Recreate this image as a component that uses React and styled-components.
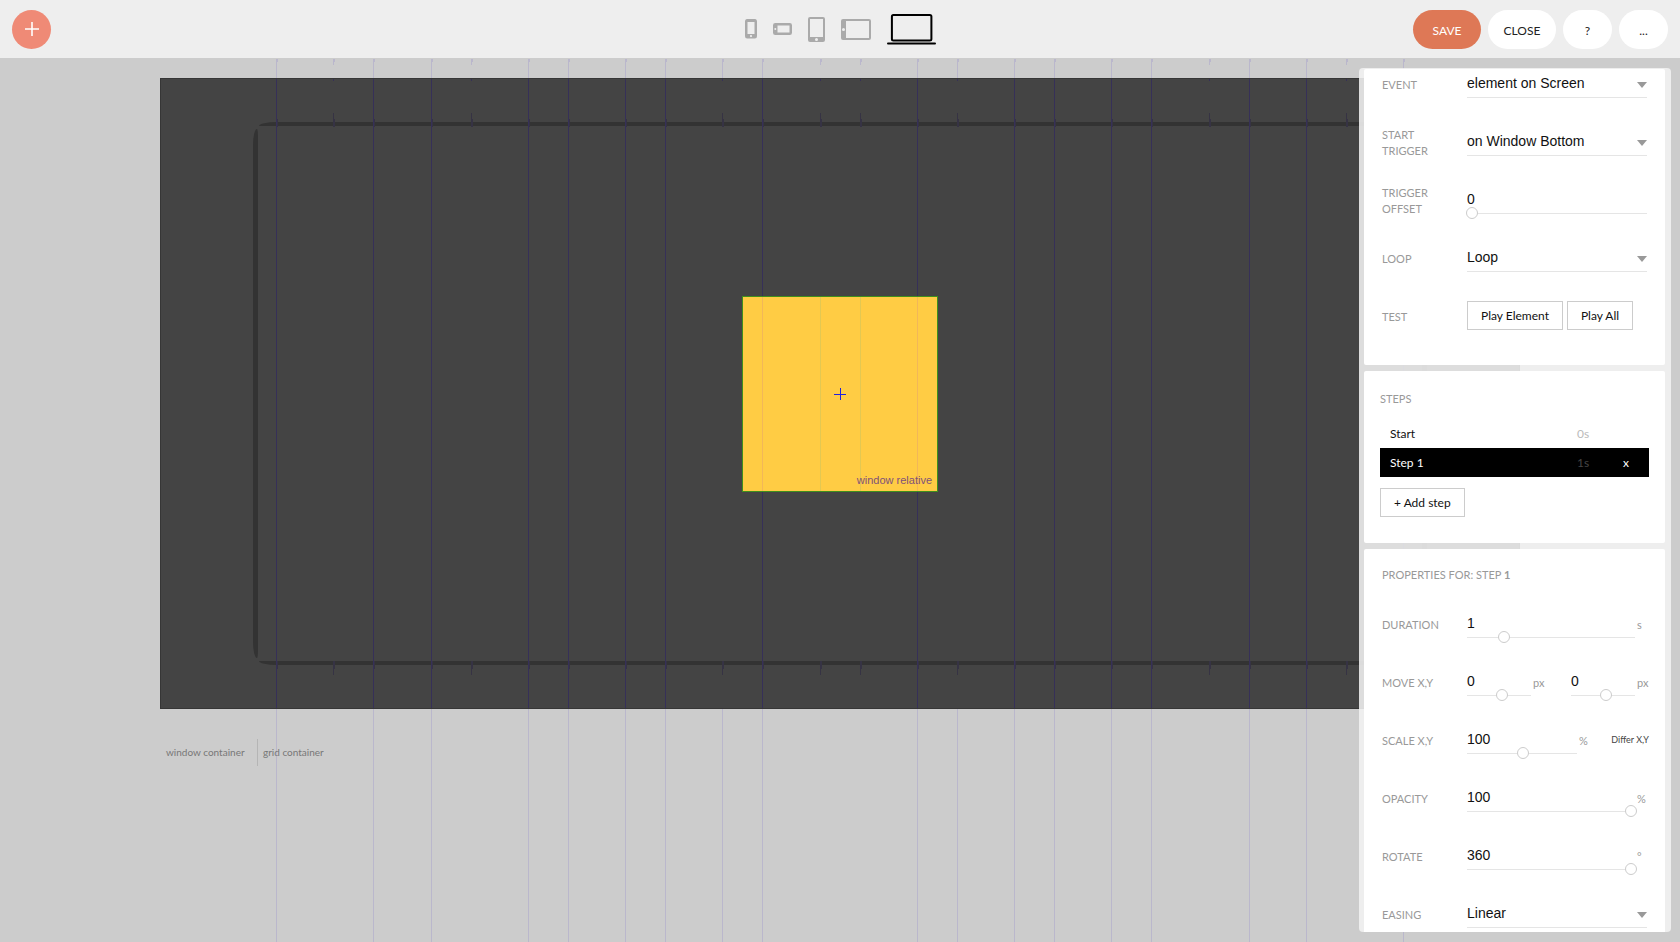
import React from "react";
import styled, { createGlobalStyle, css } from "styled-components";

// [left edge, right edge] of every grid column
const columns = [
  ["line", "tick"],
  ["line", "line"],
  ["tick", "line"],
  ["line", "line"],
  ["line", "outside"],
  ["line", "tick"],
  ["tick", "line"],
  ["outside", "line"],
  ["line", "line"],
  ["line", "tick"],
  ["line", "line"],
  ["tick", "line"],
];

function Guides({ tone }) {
  return (
    <GuideGrid aria-hidden="true">
      {columns.map(([left, right], i) => (
        <GuideColumn key={i}>
          <Guide $tone={tone} $kind={left} />
          <Guide $tone={tone} $kind={right} />
        </GuideColumn>
      ))}
    </GuideGrid>
  );
}

function SelectRow({ id, label, options }) {
  return (
    <Row>
      <Label htmlFor={id}>{label}</Label>
      <SelectBox>
        <Select id={id}>
          {options.map((option) => (
            <option key={option}>{option}</option>
          ))}
        </Select>
        <Arrow viewBox="0 0 10 6">
          <path d="M0 0h10L5 6z" fill="#999" />
        </Arrow>
      </SelectBox>
    </Row>
  );
}

function Slider({ id, name, value, unit, position, width }) {
  return (
    <SliderGroup $width={width}>
      <SliderBox>
        <NumberInput id={id} aria-label={name} defaultValue={value} />
        <Range
          type="range"
          aria-label={`${name} slider`}
          min="0"
          max="100"
          defaultValue={position}
        />
      </SliderBox>
      {unit && <Unit>{unit}</Unit>}
    </SliderGroup>
  );
}

export default function App() {
  return (
    <Page>
      <GlobalStyle />
      <Header>
        <AddButton aria-label="Add element">
          <svg width="14" height="14" viewBox="0 0 14 14">
            <path d="M7 0v14M0 7h14" stroke="#fff" strokeWidth="1.6" />
          </svg>
        </AddButton>
        <Devices>
          <DeviceButton aria-label="Phone portrait">
            <svg width="12" height="20" viewBox="0 0 12 20">
              <path
                fillRule="evenodd"
                fill="#aaa"
                d="M2.5 0h7A2.3 2.3 0 0 1 12 2.3v15a2.3 2.3 0 0 1-2.5 2.3h-7A2.3 2.3 0 0 1 0 17.3v-15A2.3 2.3 0 0 1 2.5 0zM2.5 3v12h7V3zM6 16a1.1 1.1 0 1 0 0 2.2 1.1 1.1 0 0 0 0-2.2z"
              />
            </svg>
          </DeviceButton>
          <DeviceButton aria-label="Phone landscape">
            <svg width="19" height="12" viewBox="0 0 19 12">
              <path
                fillRule="evenodd"
                fill="#aaa"
                d="M2.3 0h14.4A2.3 2.3 0 0 1 19 2.3v7.4a2.3 2.3 0 0 1-2.3 2.3H2.3A2.3 2.3 0 0 1 0 9.7V2.3A2.3 2.3 0 0 1 2.3 0zM4.5 2.5v7h12v-7zM2.3 5a1 1 0 1 0 0 2 1 1 0 0 0 0-2z"
              />
            </svg>
          </DeviceButton>
          <DeviceButton aria-label="Tablet portrait">
            <svg width="17" height="25" viewBox="0 0 17 25">
              <path
                fillRule="evenodd"
                fill="#aaa"
                d="M2 0h13a2 2 0 0 1 2 2v21a2 2 0 0 1-2 2H2a2 2 0 0 1-2-2V2a2 2 0 0 1 2-2zM2 2v18h13V2zM8.5 21a1.5 1.5 0 1 0 0 3 1.5 1.5 0 0 0 0-3z"
              />
            </svg>
          </DeviceButton>
          <DeviceButton aria-label="Tablet landscape">
            <svg width="30" height="21" viewBox="0 0 30 21">
              <path
                fillRule="evenodd"
                fill="#aaa"
                d="M2 0h26a2 2 0 0 1 2 2v17a2 2 0 0 1-2 2H2a2 2 0 0 1-2-2V2a2 2 0 0 1 2-2zM5 2v17h23V2zM2.5 9a1.5 1.5 0 1 0 0 3 1.5 1.5 0 0 0 0-3z"
              />
            </svg>
          </DeviceButton>
          <DeviceButton aria-label="Desktop">
            <svg width="49" height="31" viewBox="0 0 49 31">
              <rect x="4.9" y="1" width="39.5" height="25.5" rx="1.5" fill="none" stroke="#000" strokeWidth="2" />
              <path d="M1 29.5h47" stroke="#000" strokeWidth="2" strokeLinecap="round" />
            </svg>
          </DeviceButton>
        </Devices>
        <Actions>
          <Pill $primary>SAVE</Pill>
          <Pill>CLOSE</Pill>
          <Pill $small aria-label="Help">?</Pill>
          <Pill $small aria-label="More">...</Pill>
        </Actions>
      </Header>

      <Canvas>
        <Guides tone="light" />
        <WindowContainer>
          <Guides tone="dark" />
          <Frame>
            <HorizontalEdge />
            <VerticalEdges />
            <HorizontalEdge $bottom />
          </Frame>
          <Element>
            <Guides tone="element" />
            <Cross width="12" height="12" viewBox="0 0 12 12">
              <path d="M6.5 0v12M0 6.5h12" stroke="#2222dd" strokeWidth="1" />
            </Cross>
            <ElementTag>window relative</ElementTag>
          </Element>
        </WindowContainer>
        <Legend>
          <LegendWindow>window container</LegendWindow>
          <LegendGrid>grid container</LegendGrid>
        </Legend>

        <Panel>
          <Card $first>
            <SelectRow
              id="event"
              label="EVENT"
              options={["element on Screen"]}
            />
            <SelectRow
              id="trigger"
              label="START TRIGGER"
              options={["on Window Bottom"]}
            />
            <Row>
              <Label htmlFor="offset">TRIGGER OFFSET</Label>
              <Fields $inset>
                <Slider id="offset" name="Trigger offset" value="0" position="0" />
              </Fields>
            </Row>
            <SelectRow id="loop" label="LOOP" options={["Loop"]} />
            <Row>
              <Label as="span">TEST</Label>
              <Buttons>
                <OutlineButton>Play Element</OutlineButton>
                <OutlineButton>Play All</OutlineButton>
              </Buttons>
            </Row>
          </Card>

          <StepsCard>
            <Title>STEPS</Title>
            <Step>
              <span>Start</span>
              <StepTime>0s</StepTime>
            </Step>
            <Step $active>
              <span>Step 1</span>
              <StepTime $active>1s</StepTime>
              <RemoveButton>x</RemoveButton>
            </Step>
            <AddStep>+ Add step</AddStep>
          </StepsCard>

          <Card>
            <Title $inset>
              PROPERTIES FOR: STEP <b>1</b>
            </Title>
            <Row>
              <Label htmlFor="duration">DURATION</Label>
              <Fields>
                <Slider id="duration" name="Duration" value="1" unit="s" position="20" />
              </Fields>
            </Row>
            <Row>
              <Label htmlFor="moveX">MOVE X,Y</Label>
              <Fields>
                <Slider id="moveX" name="Move X" value="0" unit="px" position="54" />
                <Slider id="moveY" name="Move Y" value="0" unit="px" position="54" />
              </Fields>
            </Row>
            <Row>
              <Label htmlFor="scale">SCALE X,Y</Label>
              <Fields $tight>
                <Slider id="scale" name="Scale" value="100" unit="%" position="50" width={124} />
                <DifferButton>Differ X,Y</DifferButton>
              </Fields>
            </Row>
            <Row>
              <Label htmlFor="opacity">OPACITY</Label>
              <Fields>
                <Slider id="opacity" name="Opacity" value="100" unit="%" position="100" />
              </Fields>
            </Row>
            <Row>
              <Label htmlFor="rotate">ROTATE</Label>
              <Fields>
                <Slider id="rotate" name="Rotate" value="360" unit="°" position="100" />
              </Fields>
            </Row>
            <SelectRow id="easing" label="EASING" options={["Linear"]} />
          </Card>
        </Panel>
      </Canvas>
    </Page>
  );
}

const GlobalStyle = createGlobalStyle`
  * {
    box-sizing: border-box;
  }
  body {
    margin: 0;
    font-family: Lato, sans-serif;
    font-size: 13px;
    color: #111;
  }
  button,
  input,
  select {
    margin: 0;
    padding: 0;
    border: 0;
    border-radius: 0;
    background: transparent;
    font: inherit;
    color: inherit;
  }
  button {
    cursor: pointer;
  }
  svg {
    display: block;
  }
`;

const Page = styled.div`
  display: flex;
  flex-direction: column;
  height: 100vh;
  min-height: 600px;
  overflow: hidden;
  background: #ccc;
`;

const Header = styled.header`
  display: grid;
  grid-template-columns: 1fr auto 1fr;
  align-items: center;
  flex: none;
  height: 58px;
  padding: 0 12px;
  background: #eee;
`;

const AddButton = styled.button`
  display: flex;
  align-items: center;
  justify-content: center;
  width: 39px;
  height: 39px;
  border-radius: 50%;
  background: #ef8a76;
`;

const Devices = styled.nav`
  display: flex;
  align-items: center;
  gap: 16px;
`;

const DeviceButton = styled.button`
  display: block;
`;

const Actions = styled.div`
  display: flex;
  justify-content: flex-end;
  gap: 7px;
`;

const Pill = styled.button`
  width: ${(props) => (props.$small ? "49px" : "68px")};
  height: 39px;
  padding-top: 2px;
  border-radius: 20px;
  background: ${(props) => (props.$primary ? "#de7856" : "#fff")};
  color: ${(props) => (props.$primary ? "#fff" : "#222")};
  font-size: 12px;
`;

const Canvas = styled.main`
  position: relative;
  flex: 1;
  padding: 20px 160px 0;
`;

const GuideGrid = styled.div`
  position: absolute;
  top: 0;
  bottom: 0;
  left: 50%;
  display: grid;
  grid-template-columns: repeat(12, 1fr);
  column-gap: 39px;
  width: 1128px;
  margin-left: -564px;
  pointer-events: none;
`;

const GuideColumn = styled.div`
  display: flex;
  justify-content: space-between;
  margin-right: -1px;
`;

const lightGuide = css`
  background:
    linear-gradient(#bab7cc, #bab7cc) 0 1px / 1px
      ${(props) => (props.$kind === "tick" ? "6px" : "100%")} no-repeat,
    linear-gradient(#bab7cc, #bab7cc) 0 1px / 2px 3px no-repeat;
`;

const darkGuide = css`
  background:
    linear-gradient(#363058, #363058) 0 0 / 1px
      ${(props) => (props.$kind === "line" ? "100%" : "2px")} no-repeat,
    linear-gradient(#363344, #363344) 0 34px / 1px 14px no-repeat,
    linear-gradient(#363344, #363344) 0 40px / 2px 8px no-repeat,
    linear-gradient(#363344, #363344) 0 calc(100% - 33px) / 1px 14px no-repeat,
    linear-gradient(#363344, #363344) 0 calc(100% - 39px) / 2px 8px no-repeat;
`;

const elementGuide = css`
  background: linear-gradient(
      ${(props) => (props.$kind === "line" ? "#f2b758, #f2b758" : "#e3c852, #e3c852")}
    )
    0 0 / 1px 100% no-repeat;
`;

const Guide = styled.i`
  width: 2px;
  ${(props) => props.$tone === "light" && lightGuide}
  ${(props) => props.$tone === "dark" && darkGuide}
  ${(props) => props.$tone === "element" && elementGuide}
`;

const WindowContainer = styled.section`
  position: relative;
  display: flex;
  height: calc(100vh - 311px);
  padding: 43px 92px;
  border: 1px solid #363636;
  background: #444;
`;

const Frame = styled.div`
  display: flex;
  flex-direction: column;
  flex: 1;
`;

const HorizontalEdge = styled.div`
  height: 4px;
  margin: 0 6px;
  border-radius: ${(props) =>
    props.$bottom ? "0 0 18px 18px / 0 0 4px 4px" : "18px 18px 0 0 / 4px 4px 0 0"};
  background: #333;
`;

const VerticalEdges = styled.div`
  display: flex;
  justify-content: space-between;
  flex: 1;
  margin: 3px 0;
  &::before,
  &::after {
    content: "";
    width: 5px;
    border-radius: 4px 1px 1px 4px / 16px 8px 8px 16px;
    background: #333;
  }
  &::after {
    border-radius: 1px 4px 4px 1px / 8px 16px 16px 8px;
  }
`;

const Element = styled.div`
  position: absolute;
  top: 50%;
  left: 50%;
  display: grid;
  place-items: center;
  width: 196px;
  height: 196px;
  margin: -98px;
  overflow: hidden;
  border: 1px solid #3f8f1c;
  background: #ffcc44;
`;

const Cross = styled.svg`
  position: relative;
`;

const ElementTag = styled.span`
  position: absolute;
  right: 5px;
  bottom: 5px;
  font-family: "Liberation Sans", Arial, sans-serif;
  font-size: 11px;
  line-height: 12px;
  color: #80527a;
`;

const Legend = styled.div`
  position: relative;
  display: flex;
  height: 27px;
  margin-top: 30px;
  font-size: 10px;
  line-height: 27px;
  color: #777;
`;

const LegendWindow = styled.span`
  width: 98px;
  padding-left: 6px;
  border-right: 1px solid #b5b5b5;
`;

const LegendGrid = styled.span`
  padding-left: 5px;
`;

const Panel = styled.aside`
  position: absolute;
  top: 10px;
  right: 9px;
  bottom: 10px;
  display: flex;
  flex-direction: column;
  gap: 6px;
  width: 312px;
  padding: 1px 6px 0 5px;
  overflow: hidden;
  border-radius: 4px;
  background: rgba(243, 243, 243, 0.88);
`;

const Card = styled.section`
  display: flex;
  flex-direction: column;
  flex: none;
  gap: 29px;
  padding: ${(props) => (props.$first ? "0 16px 35px 18px" : "18px 16px 29px 18px")};
  border-radius: 2px;
  background: #fff;
`;

const StepsCard = styled.section`
  flex: none;
  padding: 20px 16px 26px;
  border-radius: 2px;
  background: #fff;
`;

const Title = styled.h2`
  margin: ${(props) => (props.$inset ? "0 0 -3px" : "0 0 12px")};
  font-size: 11px;
  font-weight: 400;
  line-height: 16px;
  color: #999;
`;

const Row = styled.div`
  display: grid;
  grid-template: 29px / 85px 1fr;
  align-items: center;
`;

const Label = styled.label`
  width: 64px;
  padding-top: 2px;
  font-size: 11px;
  line-height: 16px;
  color: #999;
`;

const SelectBox = styled.div`
  position: relative;
  margin-right: 2px;
`;

const controlText = css`
  display: block;
  width: 100%;
  height: 29px;
  border-bottom: 1px solid #e5e5e5;
  outline: none;
  font-family: "Liberation Sans", Arial, sans-serif;
  font-size: 14px;
  color: #111;
`;

const Select = styled.select`
  ${controlText}
  appearance: none;
`;

const Arrow = styled.svg`
  position: absolute;
  right: 0;
  bottom: 10px;
  width: 10px;
  height: 6px;
  pointer-events: none;
`;

const Fields = styled.div`
  display: flex;
  align-items: center;
  justify-content: space-between;
  gap: ${(props) => (props.$tight ? "16px" : "26px")};
  margin-right: ${(props) => (props.$inset ? "2px" : "0")};
`;

const SliderGroup = styled.div`
  display: flex;
  flex: ${(props) => (props.$width ? `0 0 ${props.$width}px` : "1")};
  min-width: 0;
`;

const SliderBox = styled.div`
  flex: 1;
  min-width: 0;
  height: 29px;
`;

const NumberInput = styled.input`
  ${controlText}
`;

const Range = styled.input`
  position: relative;
  display: block;
  width: calc(100% + 3px);
  height: 12px;
  margin: -7px -2px 0 -1px;
  appearance: none;
  &::-webkit-slider-thumb {
    appearance: none;
    width: 12px;
    height: 12px;
    border: 1px solid #ccc;
    border-radius: 50%;
    background: #fff;
  }
`;

const Unit = styled.span`
  width: 14px;
  padding: 8px 0 0 2px;
  font-size: 11px;
  line-height: 16px;
  white-space: nowrap;
  color: #999;
`;

const Buttons = styled.div`
  display: flex;
  gap: 4px;
`;

const OutlineButton = styled.button`
  height: 29px;
  padding: 0 13px;
  border: 1px solid #ccc;
  background: #fff;
  font-size: 12px;
`;

const Step = styled.div`
  display: grid;
  grid-template-columns: 1fr 46px 26px;
  align-items: center;
  height: 29px;
  padding-left: 10px;
  font-size: 12px;
  background: ${(props) => (props.$active ? "#000" : "#fff")};
  color: ${(props) => (props.$active ? "#fff" : "#111")};
`;

const StepTime = styled.span`
  color: ${(props) => (props.$active ? "#444" : "#bbb")};
`;

const RemoveButton = styled.button`
  justify-self: start;
`;

const AddStep = styled(OutlineButton)`
  display: block;
  margin-top: 11px;
`;

const DifferButton = styled.button`
  flex: none;
  font-size: 9px;
  white-space: nowrap;
  color: #444;
`;
